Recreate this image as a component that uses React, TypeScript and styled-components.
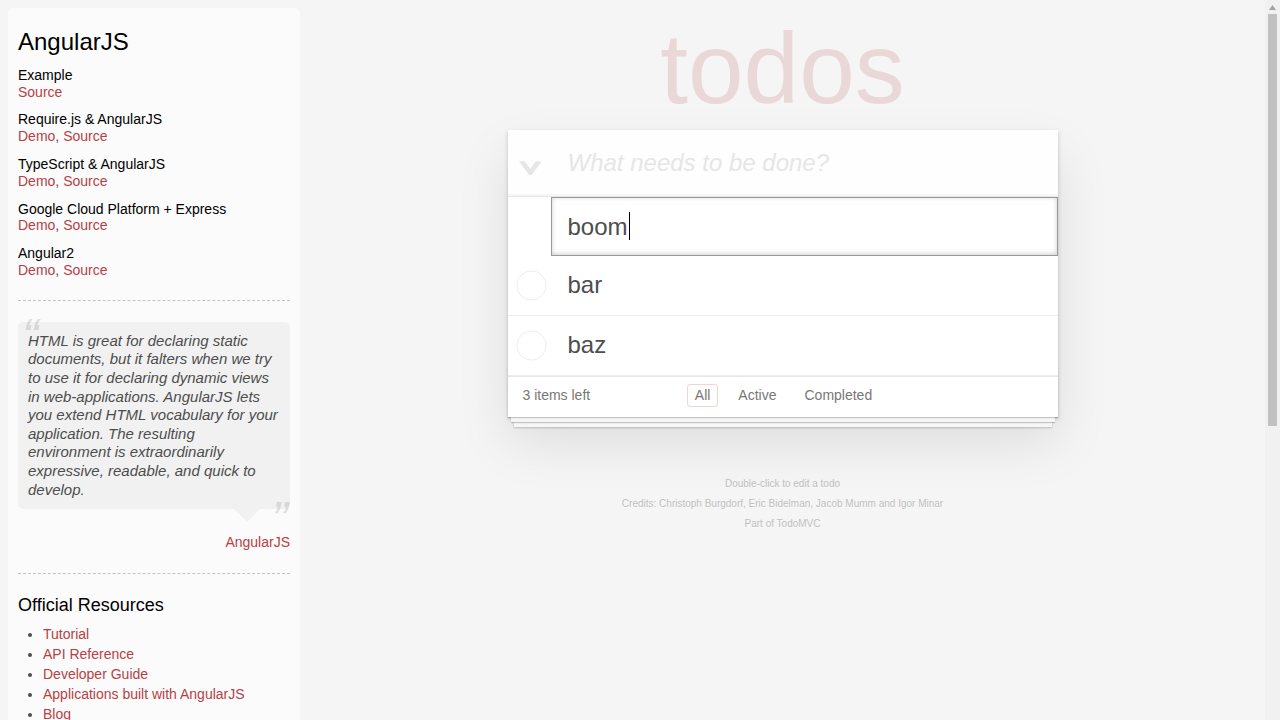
import React from 'react';
import styled, { createGlobalStyle } from 'styled-components';

const GlobalStyle = createGlobalStyle`
  html, body {
    margin: 0;
    padding: 0;
  }

  body {
    font: 14px 'Liberation Sans', Arial, Helvetica, sans-serif;
    line-height: 1.4em;
    background: #f5f5f5;
    color: #4d4d4d;
    font-weight: 300;
    -webkit-font-smoothing: antialiased;
    overflow: hidden;
  }
`;

const Viewport = styled.div`
  display: flex;
  height: 100vh;
  overflow: hidden;
`;

const Page = styled.div`
  flex: 1;
  min-width: 0;
  display: flex;
  align-items: flex-start;
`;

const ScrollTrack = styled.div`
  flex: 0 0 15px;
  display: flex;
  flex-direction: column;
  align-items: center;
  background: #f1f1f1;
`;

const ScrollArrow = styled.div`
  height: 14px;
  display: flex;
  align-items: flex-start;
  padding-top: 5px;
  box-sizing: border-box;
`;

const ScrollThumb = styled.div`
  width: 9px;
  height: 412px;
  background: #c1c1c1;
`;

/* ---------- learn sidebar ---------- */

const Learn = styled.aside`
  flex: 0 0 272px;
  margin: 8px 0 0 8px;
  padding: 10px;
  border-radius: 5px;
  background-color: rgba(255, 255, 255, 0.6);
`;

const SiteTitle = styled.h3`
  margin: 10px 0;
  font-size: 24px;
  font-weight: 500;
  line-height: 1.2;
  color: #000;
`;

const ExampleName = styled.h5`
  margin: 10px 0 0;
  font-size: 14px;
  font-weight: 500;
  line-height: 1.2;
  color: #000;
`;

const LinkLine = styled.div`
  line-height: 17.8px;
`;

const LearnLink = styled.a`
  font-weight: normal;
  text-decoration: none;
  color: #b83f45;
`;

const Divider = styled.hr`
  height: 0;
  margin: 20px 0;
  border: 0;
  border-top: 1px dashed #c5c5c5;
  border-bottom: 1px dashed #f7f7f7;
`;

const Quote = styled.blockquote`
  margin: 20px 0 0;
  padding: 0;
  border: none;
`;

const SpeechBubble = styled.div`
  position: relative;
  padding: 10px;
  border-radius: 5px;
  background: rgba(0, 0, 0, 0.04);

  &::after {
    content: '';
    position: absolute;
    top: 100%;
    right: 30px;
    border: 13px solid transparent;
    border-top-color: rgba(0, 0, 0, 0.04);
  }
`;

const QuoteText = styled.p`
  margin: 0;
  font-size: 15px;
  font-style: italic;
  font-weight: 300;
  line-height: 18.6px;

  &::before,
  &::after {
    position: absolute;
    font-size: 50px;
    line-height: 50px;
    opacity: 0.15;
  }

  &::before {
    content: '\\201C';
    top: -10px;
    left: 4px;
  }

  &::after {
    content: '\\201D';
    bottom: -36px;
    right: 2px;
  }
`;

const QuoteFooter = styled.footer`
  margin-top: 24px;
  text-align: right;
  line-height: 19.6px;
`;

const SectionTitle = styled.h4`
  margin: 10px 0 8px;
  font-size: 18px;
  font-weight: 500;
  line-height: 1.2;
  color: #000;
`;

const ResourceList = styled.ul`
  padding: 0;
  margin: 0 0 30px 25px;
`;

const ResourceItem = styled.li`
  line-height: 20px;
`;

const LearnFooter = styled.footer`
  font-style: italic;
`;

/* ---------- todo app ---------- */

const Main = styled.main`
  flex: 1;
  min-width: 0;
`;

const Column = styled.section`
  max-width: 550px;
  margin: 0 auto;
`;

const Title = styled.h1`
  margin: 18px 0 12px;
  font-size: 100px;
  font-weight: 100;
  line-height: 100px;
  text-align: center;
  color: rgba(175, 47, 47, 0.15);
  text-rendering: optimizeLegibility;
`;

const TodoApp = styled.div`
  position: relative;
  margin-bottom: 40px;
  background: #fff;
  box-shadow: 0 2px 4px 0 rgba(0, 0, 0, 0.2), 0 25px 50px 0 rgba(0, 0, 0, 0.1);
`;

const NewTodoRow = styled.header`
  display: flex;
  align-items: center;
  background: rgba(0, 0, 0, 0.003);
  box-shadow: inset 0 -2px 1px rgba(0, 0, 0, 0.03);
`;

const ToggleAll = styled.label`
  flex: 0 0 60px;
  display: flex;
  box-sizing: border-box;
  padding: 10px 0 0 11px;
`;

const NewTodoInput = styled.input`
  flex: 1;
  min-width: 0;
  height: 65.6px;
  box-sizing: border-box;
  margin: 0;
  padding: 16px 16px 16px 0;
  border: none;
  outline: none;
  background: transparent;
  font-family: inherit;
  font-size: 24px;
  font-weight: inherit;
  line-height: 1.4em;
  color: inherit;

  &::placeholder {
    font-style: italic;
    font-weight: 300;
    color: #e6e6e6;
  }
`;

const TodoList = styled.ul`
  position: relative;
  z-index: 2;
  margin: 0;
  padding: 0;
  list-style: none;
  border-top: 1px solid #e6e6e6;
`;

const EditingItem = styled.li`
  padding: 0;
  font-size: 24px;
`;

const EditBox = styled.div`
  display: flex;
  align-items: center;
  margin: 0 0 0 43px;
  padding: 12px 16px;
  border: 1px solid #999;
  box-shadow: inset 0 -1px 5px 0 rgba(0, 0, 0, 0.2);
  line-height: 1.4em;
`;

const Caret = styled.span`
  width: 1px;
  height: 28px;
  margin-left: 1px;
  background: #000;
`;

const TodoItem = styled.li`
  display: flex;
  align-items: center;
  font-size: 24px;
  border-bottom: 1px solid #ededed;
`;

const Toggle = styled.span`
  flex: 0 0 60px;
  display: flex;
  box-sizing: border-box;
  padding-left: 8px;
`;

const TodoLabel = styled.label`
  flex: 1;
  padding: 15px 15px 15px 0;
  line-height: 1.2;
  word-break: break-all;
`;

const Footer = styled.footer`
  position: relative;
  display: grid;
  grid-template-columns: 1fr auto 1fr;
  grid-template-rows: 20px;
  align-items: center;
  height: 20px;
  padding: 9px 15px 11px;
  color: #777;
  border-top: 1px solid #e6e6e6;

  &::before {
    content: '';
    position: absolute;
    right: 0;
    bottom: 0;
    left: 0;
    height: 50px;
    overflow: hidden;
    pointer-events: none;
    box-shadow: 0 1px 1px rgba(0, 0, 0, 0.2), 0 8px 0 -3px #f6f6f6,
      0 9px 1px -3px rgba(0, 0, 0, 0.2), 0 16px 0 -6px #f6f6f6,
      0 17px 2px -6px rgba(0, 0, 0, 0.2);
  }
`;

const TodoCount = styled.span`
  justify-self: start;
  line-height: 19px;
`;

const Filters = styled.ul`
  display: flex;
  align-items: center;
  gap: 6px;
  margin: 0 0 0 2px;
  padding: 0;
  list-style: none;
`;

const FilterLink = styled.a<{ $selected?: boolean }>`
  display: block;
  margin: 0 3px;
  padding: 3px 7px;
  line-height: 15px;
  color: inherit;
  text-decoration: none;
  border: 1px solid ${p => (p.$selected ? 'rgba(175, 47, 47, 0.2)' : 'transparent')};
  border-radius: 3px;
`;

const Info = styled.footer`
  margin: 62px auto 0;
  color: #bfbfbf;
  font-size: 10px;
  text-shadow: 0 1px 0 rgba(255, 255, 255, 0.5);
  text-align: center;
`;

const InfoLine = styled.p`
  margin: 10px 0;
  line-height: 1;
`;

const InfoLink = styled.a`
  color: inherit;
  text-decoration: none;
`;

const ChevronDown = () => (
  <svg width="23" height="14" viewBox="0 0 23 14">
    <polygon points="0,0.5 5.5,0 11.3,8 17,0 22.5,0.5 12.6,14 10,14" fill="#e6e6e6" />
  </svg>
);

const CheckCircle = () => (
  <svg width="31" height="31" viewBox="0 0 31 31">
    <circle cx="15.5" cy="15.5" r="14.6" fill="none" stroke="#ededed" strokeWidth="1" />
  </svg>
);

const ArrowUp = () => (
  <svg width="7" height="5" viewBox="0 0 7 5">
    <polygon points="3.5,0 7,5 0,5" fill="#a3a3a3" />
  </svg>
);

const sourceGroups = [
  { name: 'Example', links: ['Source'] },
  { name: 'Require.js & AngularJS', links: ['Demo', 'Source'] },
  { name: 'TypeScript & AngularJS', links: ['Demo', 'Source'] },
  { name: 'Google Cloud Platform + Express', links: ['Demo', 'Source'] },
  { name: 'Angular2', links: ['Demo', 'Source'] },
];

const resourceSections = [
  {
    title: 'Official Resources',
    items: [
      'Tutorial',
      'API Reference',
      'Developer Guide',
      'Applications built with AngularJS',
      'Blog',
      'FAQ',
      'AngularJS Meetups',
    ],
  },
  {
    title: 'Articles and Guides',
    items: [
      'Code School AngularJS course',
      '5 Awesome AngularJS Features',
      'Using Yeoman with AngularJS',
      'me&ngular - an introduction to MVW',
    ],
  },
  {
    title: 'Community',
    items: [
      'Walkthroughs and Tutorials on YouTube',
      'Google Groups mailing list',
      'angularjs on Stack Overflow',
      'AngularJS on Twitter',
      'AngularjS on Google +',
    ],
  },
];

const todos = ['bar', 'baz'];
const filters = ['All', 'Active', 'Completed'];

export default function App() {
  return (
    <>
      <GlobalStyle />
      <Viewport>
        <Page>
          <Learn>
            <header>
              <SiteTitle>AngularJS</SiteTitle>
              {sourceGroups.map(group => (
                <div key={group.name}>
                  <ExampleName>{group.name}</ExampleName>
                  <LinkLine>
                    {group.links.map((link, i) => (
                      <React.Fragment key={link}>
                        {i > 0 && ', '}
                        <LearnLink href="#">{link}</LearnLink>
                      </React.Fragment>
                    ))}
                  </LinkLine>
                </div>
              ))}
            </header>
            <Divider />
            <Quote>
              <SpeechBubble>
                <QuoteText>
                  HTML is great for declaring static documents, but it falters when we try to use
                  it for declaring dynamic views in web-applications. AngularJS lets you extend HTML
                  vocabulary for your application. The resulting environment is extraordinarily
                  expressive, readable, and quick to develop.
                </QuoteText>
              </SpeechBubble>
              <QuoteFooter>
                <LearnLink href="#">AngularJS</LearnLink>
              </QuoteFooter>
            </Quote>
            <Divider />
            {resourceSections.map(section => (
              <div key={section.title}>
                <SectionTitle>{section.title}</SectionTitle>
                <ResourceList>
                  {section.items.map(item => (
                    <ResourceItem key={item}>
                      <LearnLink href="#">{item}</LearnLink>
                    </ResourceItem>
                  ))}
                </ResourceList>
              </div>
            ))}
            <LearnFooter>
              <Divider />
              If you have other helpful links to share, or find any of the links above no longer
              work, please <LearnLink href="#">let us know</LearnLink>.
            </LearnFooter>
          </Learn>

          <Main>
            <Column>
              <Title>todos</Title>
              <TodoApp>
                <NewTodoRow>
                  <ToggleAll>
                    <ChevronDown />
                  </ToggleAll>
                  <NewTodoInput placeholder="What needs to be done?" />
                </NewTodoRow>
                <TodoList>
                  <EditingItem>
                    <EditBox>
                      <span>boom</span>
                      <Caret />
                    </EditBox>
                  </EditingItem>
                  {todos.map(todo => (
                    <TodoItem key={todo}>
                      <Toggle>
                        <CheckCircle />
                      </Toggle>
                      <TodoLabel>{todo}</TodoLabel>
                    </TodoItem>
                  ))}
                </TodoList>
                <Footer>
                  <TodoCount>3 items left</TodoCount>
                  <Filters>
                    {filters.map(f => (
                      <li key={f}>
                        <FilterLink href="#" $selected={f === 'All'}>
                          {f}
                        </FilterLink>
                      </li>
                    ))}
                  </Filters>
                </Footer>
              </TodoApp>
              <Info>
                <InfoLine>Double-click to edit a todo</InfoLine>
                <InfoLine>
                  Credits: <InfoLink href="#">Christoph Burgdorf</InfoLink>,{' '}
                  <InfoLink href="#">Eric Bidelman</InfoLink>,{' '}
                  <InfoLink href="#">Jacob Mumm</InfoLink> and{' '}
                  <InfoLink href="#">Igor Minar</InfoLink>
                </InfoLine>
                <InfoLine>
                  Part of <InfoLink href="#">TodoMVC</InfoLink>
                </InfoLine>
              </Info>
            </Column>
          </Main>
        </Page>
        <ScrollTrack>
          <ScrollArrow>
            <ArrowUp />
          </ScrollArrow>
          <ScrollThumb />
        </ScrollTrack>
      </Viewport>
    </>
  );
}
